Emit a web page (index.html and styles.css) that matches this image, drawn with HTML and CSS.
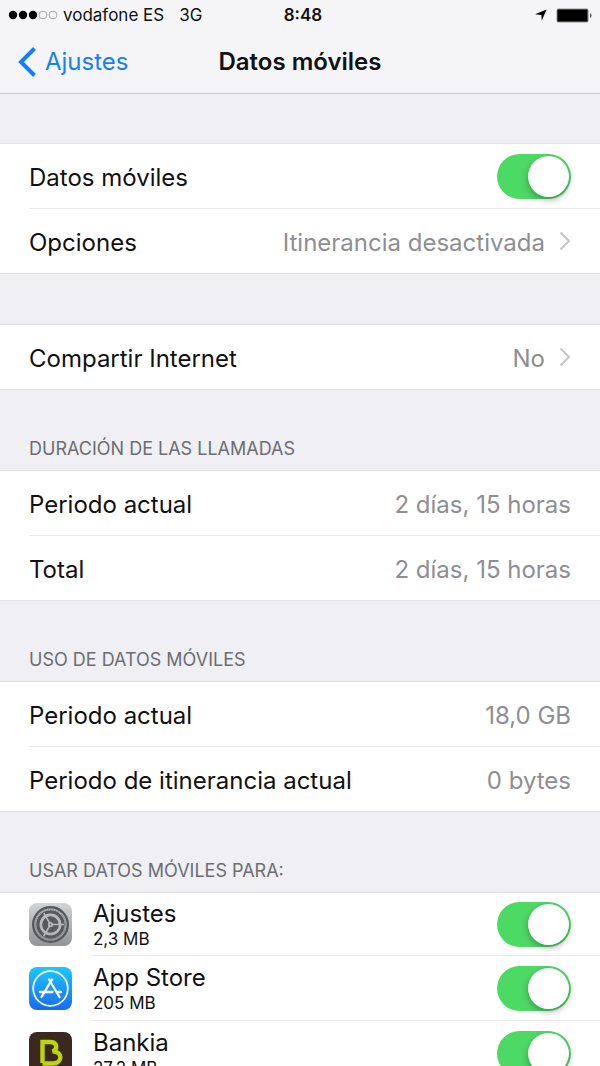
FILE: index.html
```html
<!DOCTYPE html>
<html lang="es">
<head>
<meta charset="utf-8">
<meta name="viewport" content="width=device-width, initial-scale=1">
<title>Datos móviles</title>
<link rel="stylesheet" href="styles.css">
</head>
<body>
<div class="screen">
  <header class="header">
    <div class="status">
      <div class="status-left">
        <svg class="signal" viewBox="0 0 50 10" aria-hidden="true">
          <circle cx="5" cy="5" r="4.2"/><circle cx="15" cy="5" r="4.2"/><circle cx="25" cy="5" r="4.2"/>
          <circle class="signal-off" cx="35" cy="5" r="3.9"/><circle class="signal-off" cx="45" cy="5" r="3.9"/>
        </svg>
        <span class="carrier">vodafone ES</span>
        <span>3G</span>
      </div>
      <time class="clock">8:48</time>
      <div class="status-right">
        <svg class="location" viewBox="0 0 12 12" aria-hidden="true"><path d="M11.6.4 6.8 11.4 6.3 5.9 0 5.2Z"/></svg>
        <svg class="battery" viewBox="0 0 36 15" aria-hidden="true">
          <rect x=".5" y=".5" width="32" height="14" rx="2" fill="#8d8d90"/>
          <rect x="1.5" y="1.5" width="30" height="12" rx=".5"/>
          <path d="M34 5c2 .7 2 4.300 0 5Z" fill="#555"/>
        </svg>
      </div>
    </div>
    <nav class="navbar">
      <a class="back" href="#">
        <svg class="back-icon" viewBox="0 0 18 30" aria-hidden="true"><path d="M16.500 1.500 3 15l13.500 13.500"/></svg>
        Ajustes
      </a>
      <h1 class="title">Datos móviles</h1>
    </nav>
  </header>

  <main>
    <section class="group group-first">
      <div class="row">
        <label class="label" for="data">Datos móviles</label>
        <input class="switch" id="data" type="checkbox" role="switch" checked>
      </div>
      <a class="row" href="#">
        <span class="label">Opciones</span>
        <span class="value">Itinerancia desactivada</span>
        <svg class="chevron" viewBox="0 0 12 20" aria-hidden="true"><path d="m1.500 1.500 8.500 8.500-8.500 8.500"/></svg>
      </a>
    </section>

    <section class="group group-plain">
      <a class="row" href="#">
        <span class="label">Compartir Internet</span>
        <span class="value">No</span>
        <svg class="chevron" viewBox="0 0 12 20" aria-hidden="true"><path d="m1.500 1.500 8.500 8.500-8.500 8.500"/></svg>
      </a>
    </section>

    <h2 class="heading">DURACIÓN DE LAS LLAMADAS</h2>
    <section class="group">
      <div class="row"><span class="label">Periodo actual</span><span class="value">2 días, 15 horas</span></div>
      <div class="row"><span class="label">Total</span><span class="value">2 días, 15 horas</span></div>
    </section>

    <h2 class="heading">USO DE DATOS MÓVILES</h2>
    <section class="group">
      <div class="row"><span class="label">Periodo actual</span><span class="value">18,0 GB</span></div>
      <div class="row"><span class="label">Periodo de itinerancia actual</span><span class="value">0 bytes</span></div>
    </section>

    <h2 class="heading">USAR DATOS MÓVILES PARA:</h2>
    <section class="group">
      <div class="app">
        <svg class="app-icon" viewBox="0 0 43 43" aria-hidden="true">
          <defs><linearGradient id="gray" x2="0" y2="1"><stop stop-color="#d3d4d6"/><stop offset="1" stop-color="#929397"/></linearGradient></defs>
          <rect width="43" height="43" rx="8" fill="url(#gray)"/>
          <g fill="none" stroke="#58595c">
            <circle cx="21.500" cy="21.500" r="17.300" stroke-width="2.400"/>
            <circle cx="21.500" cy="21.500" r="12.600" stroke-width="3.200"/>
            <circle cx="21.500" cy="21.500" r="15.200" stroke="#8b8c8f" stroke-width="1.600" stroke-dasharray="1.200 .6"/>
          </g>
          <circle cx="21.500" cy="21.500" r="8.300" fill="#58595c"/>
          <g fill="none" stroke="#b9babd" stroke-width="1.700">
            <circle cx="21.500" cy="21.500" r="9.600"/>
            <path d="M23 21.500H35M20.700 20.200 14.700 9.800M20.700 22.800 14.700 33.200"/>
            <circle cx="21.500" cy="21.500" r="1.700" fill="#58595c"/>
          </g>
        </svg>
        <div class="app-body">
          <label class="app-text" for="app1"><span class="app-name">Ajustes</span><span class="app-size">2,3 MB</span></label>
          <input class="switch" id="app1" type="checkbox" role="switch" checked>
        </div>
      </div>
      <div class="app">
        <svg class="app-icon" viewBox="0 0 43 43" aria-hidden="true">
          <defs><linearGradient id="blue" x2="0" y2="1"><stop stop-color="#1cc9fb"/><stop offset="1" stop-color="#1a69f0"/></linearGradient></defs>
          <rect width="43" height="43" rx="8" fill="url(#blue)"/>
          <g fill="none" stroke="#fff" stroke-linecap="round">
            <circle cx="21.500" cy="21.500" r="17.300" stroke-width="1.700"/>
            <path d="M20 12.500 30.500 30M23 12.500 12.500 30" stroke-width="2.300"/>
            <path d="M11 25h12.500M28 25h4" stroke-width="2.300"/>
          </g>
        </svg>
        <div class="app-body">
          <label class="app-text" for="app2"><span class="app-name">App Store</span><span class="app-size">205 MB</span></label>
          <input class="switch" id="app2" type="checkbox" role="switch" checked>
        </div>
      </div>
      <div class="app">
        <svg class="app-icon" viewBox="0 0 43 43" aria-hidden="true">
          <rect width="43" height="43" rx="8" fill="#3b281e"/>
          <path d="M13.500 31V10H21c7.500 0 8 7.500 2.500 9.500 10.500-.5 10.500 12 0 12H13.500" fill="none" stroke="#bfd40b" stroke-width="4.400"/>
          <path d="M13 39c5-4 13-4 18 0" fill="none" stroke="#bfd40b" stroke-width="3"/>
        </svg>
        <div class="app-body">
          <label class="app-text" for="app3"><span class="app-name">Bankia</span><span class="app-size">27,2 MB</span></label>
          <input class="switch" id="app3" type="checkbox" role="switch" checked>
        </div>
      </div>
    </section>
  </main>
</div>
</body>
</html>
```
FILE: styles.css
```css
* {
  box-sizing: border-box;
}

body {
  margin: 0;
  background: #efeff4;
  color: #111;
  font-family: Inter, "Liberation Sans", sans-serif;
  font-size: 24px;
  line-height: 32px;
}

a {
  color: inherit;
  text-decoration: none;
}

.screen {
  height: 100vh;
  overflow: hidden;
}

.header {
  background: #f5f5f7;
  border-bottom: 1px solid #cbcbcf;
}

.status {
  display: grid;
  grid-template-columns: 1fr auto 1fr;
  align-items: center;
  height: 30px;
  padding: 0 8px;
  font-size: 17px;
  line-height: 20px;
}

.status-left,
.status-right {
  display: flex;
  align-items: center;
}

.status-right {
  justify-content: flex-end;
  gap: 9px;
}

.signal {
  width: 50px;
  height: 10px;
  margin-right: 5px;
}

.signal-off {
  fill: none;
  stroke: #aaa;
}

.carrier {
  margin-right: 15px;
}

.clock {
  padding-left: 6px;
  font-weight: 600;
}

.location {
  width: 12px;
  height: 12px;
}

.battery {
  width: 36px;
  height: 15px;
}

.navbar {
  display: grid;
  grid-template-columns: 1fr auto 1fr;
  align-items: center;
  height: 63px;
  padding: 0 18px;
}

.back {
  display: flex;
  align-items: center;
  gap: 9px;
  color: #157efb;
}

.back-icon {
  width: 18px;
  height: 30px;
  fill: none;
  stroke: currentColor;
  stroke-width: 4;
}

.title {
  margin: 0;
  font-size: 24px;
  font-weight: 600;
}

.group {
  background: #fff;
  border: solid #e2e2e6;
  border-width: 1px 0;
}

.group-first {
  margin-top: 49px;
}

.group-plain {
  margin-top: 50px;
}

.row {
  display: flex;
  align-items: center;
  height: 64px;
  margin-left: 29px;
  padding-right: 29px;
}

.row + .row {
  height: 65px;
  border-top: 1px solid #e8e8ea;
}

.label,
.value {
  padding-top: 3px;
}

.label {
  flex: 1;
}

.value {
  color: #8e8e93;
}

.chevron {
  width: 12px;
  height: 20px;
  margin-left: 14px;
  fill: none;
  stroke: #c4c4c9;
  stroke-width: 2;
}

.heading {
  height: 80px;
  margin: 0;
  padding: 47px 29px 0;
  color: #6d6d72;
  font-size: 18px;
  font-weight: 400;
  line-height: 24px;
}

.switch {
  position: relative;
  flex: none;
  width: 74px;
  height: 45px;
  margin: 0;
  appearance: none;
  background: #d9d9dc;
  border-radius: 23px;
}

.switch::before {
  position: absolute;
  top: 2px;
  left: 2px;
  width: 41px;
  height: 41px;
  content: "";
  background: #fff;
  border-radius: 50%;
  box-shadow: 0 3px 6px rgba(0, 0, 0, 0.3);
}

.switch:checked {
  background: #4cd964;
}

.switch:checked::before {
  left: 31px;
}

.app {
  display: flex;
  align-items: center;
  gap: 21px;
  padding-left: 29px;
}

.app-icon {
  flex: none;
  width: 43px;
  height: 43px;
}

.app-body {
  display: flex;
  flex: 1;
  align-items: center;
  height: 65px;
  padding-right: 29px;
  border-bottom: 1px solid #e8e8ea;
}

.app:first-child .app-body {
  height: 63px;
}

.app-text {
  display: grid;
  flex: 1;
  padding-top: 2px;
}

.app-name {
  line-height: 28px;
}

.app-size {
  font-size: 17px;
  line-height: 22px;
}
```
